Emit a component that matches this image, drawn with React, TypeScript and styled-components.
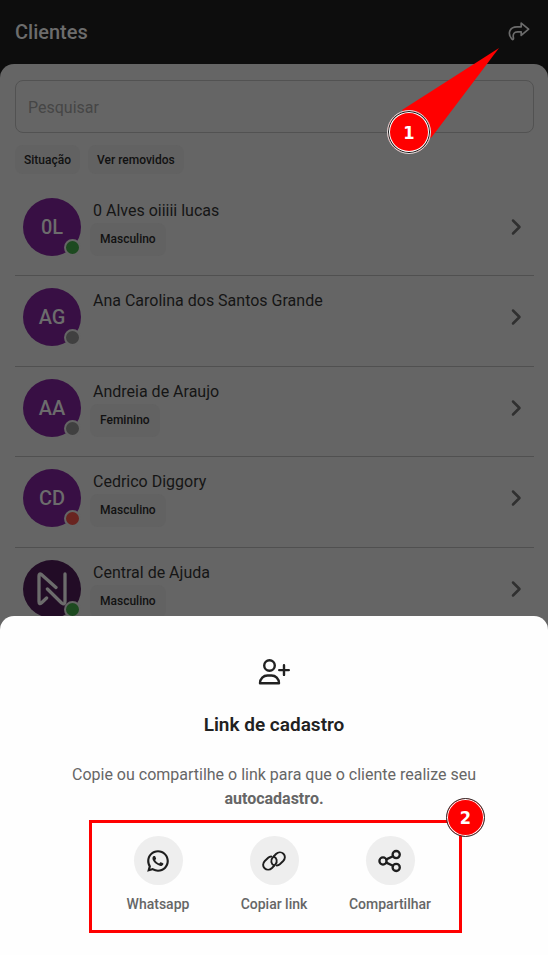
import React from "react";
import styled, { createGlobalStyle } from "styled-components";
import { RiWhatsappLine } from "react-icons/ri";

const GlobalStyle = createGlobalStyle`
  *, *::before, *::after { box-sizing: border-box; }
  body { margin: 0; background: #0d0d0d; font-family: Roboto, "Noto Sans", sans-serif; }
  button, input { font: inherit; }
  button { border: 0; padding: 0; background: none; cursor: pointer; }
  h1, h2, p, ul { margin: 0; padding: 0; }
`;

const Screen = styled.div`
  position: relative;
  display: flex;
  flex-direction: column;
  height: 100vh;
  overflow: hidden;
`;

const Header = styled.header`
  position: relative;
  display: flex;
  flex: none;
  align-items: center;
  justify-content: space-between;
  height: 64px;
  padding: 0 18px 0 15px;
  color: #6c6c6c;
`;

const Title = styled.h1`
  font-size: 20px;
  line-height: 24px;
  font-weight: 500;
`;

const ShareButton = styled.button`
  display: flex;
  color: #6c6c6c;
`;

const Panel = styled.main`
  flex: 1;
  padding: 16px 14px 0 15px;
  border-radius: 14px 14px 0 0;
  background: #656565;
`;

const Search = styled.input`
  display: block;
  width: 100%;
  height: 53px;
  padding: 1px 12px 0;
  border: 1px solid #525252;
  border-radius: 8px;
  outline: 0;
  background: transparent;
  font-size: 16px;
  color: #1c1c1c;
  &::placeholder { color: #464646; opacity: 1; }
`;

const Filters = styled.div`
  display: flex;
  gap: 8px;
  margin-top: 12px;
`;

const FilterChip = styled.button`
  height: 29px;
  padding: 0 9px;
  border-radius: 8px;
  background: #626262;
  font-size: 12px;
  font-weight: 500;
  color: #111;
`;

const List = styled.ul`
  display: grid;
  grid-auto-rows: 1fr;
  height: 452px;
  margin-top: 12px;
  list-style: none;
`;

const Row = styled.li`
  display: flex;
  align-items: flex-start;
  gap: 12px;
  padding: 12px 8px 0;
  border-bottom: 1px solid #505050;
`;

const Avatar = styled.div<{ $dark?: boolean }>`
  position: relative;
  display: flex;
  flex: none;
  align-items: center;
  justify-content: center;
  width: 58px;
  height: 58px;
  border-radius: 50%;
  background: ${(p) => (p.$dark ? "#220c26" : "#380f44")};
  font-size: 20px;
  font-weight: 500;
  color: #6c6c6c;
`;

const Status = styled.span<{ $color: string }>`
  position: absolute;
  right: 0;
  bottom: 0;
  width: 17px;
  height: 17px;
  border: 2px solid #656565;
  border-radius: 50%;
  background: ${(p) => p.$color};
`;

const Info = styled.div`
  flex: 1;
  padding-top: 1px;
`;

const Name = styled.p`
  font-size: 16px;
  line-height: 24px;
  color: #151515;
`;

const Tag = styled.span`
  display: inline-block;
  margin-left: -3px;
  padding: 0 10px;
  border-radius: 8px;
  background: #626262;
  font-size: 12px;
  line-height: 33px;
  font-weight: 500;
  color: #111;
`;

const RowButton = styled.button`
  display: flex;
  align-items: center;
  height: 58px;
  color: #303030;
`;

const Sheet = styled.section`
  position: absolute;
  inset: auto 0 0;
  display: flex;
  flex-direction: column;
  align-items: center;
  padding: 40px 24px 42px;
  border-radius: 14px 14px 0 0;
  background: #fefefe;
  color: #212121;
`;

const SheetTitle = styled.h2`
  margin-top: 25px;
  font-size: 19px;
  line-height: 24px;
  font-weight: 600;
`;

const Description = styled.p`
  max-width: 440px;
  margin-top: 26px;
  font-size: 16px;
  line-height: 24px;
  text-align: center;
  color: #666;
`;

const Actions = styled.div`
  position: relative;
  display: grid;
  grid-template-columns: repeat(3, 116px);
  margin-top: 25px;
`;

const Action = styled.button`
  display: flex;
  flex-direction: column;
  align-items: center;
  gap: 10px;
  font-size: 14px;
  line-height: 18px;
  font-weight: 500;
  color: #666;
`;

const ActionIcon = styled.span`
  display: flex;
  align-items: center;
  justify-content: center;
  width: 49px;
  height: 49px;
  border-radius: 50%;
  background: #eee;
  color: #1e1e1e;
`;

const Highlight = styled.div`
  position: absolute;
  inset: -16px -14px -20px -11px;
  border: 3px solid #f00;
  pointer-events: none;
`;

const Callout = styled.div`
  position: absolute;
  top: 48px;
  right: 49px;
  width: 112px;
  height: 106px;
  pointer-events: none;
`;

const Pointer = styled.svg`
  display: block;
`;

const Marker = styled.span<{ $place: "start" | "corner" }>`
  position: absolute;
  ${(p) => (p.$place === "start" ? "left: 0; bottom: 0;" : "top: -25px; right: -26px;")}
  display: flex;
  align-items: center;
  justify-content: center;
  width: ${(p) => (p.$place === "start" ? 44 : 39)}px;
  height: ${(p) => (p.$place === "start" ? 44 : 39)}px;
  border: 1px solid ${(p) => (p.$place === "start" ? "#ddd" : "#333")};
  border-radius: 50%;
  background: #f00;
  box-shadow: ${(p) =>
    p.$place === "start"
      ? "inset 0 0 0 1px #111, inset 0 0 0 2px #fff"
      : "inset 0 0 0 1px #fff"};
  font-family: "DejaVu Sans Condensed", "DejaVu Sans", sans-serif;
  font-size: 18px;
  font-weight: 700;
  color: #fff;
`;

const strokeProps = {
  fill: "none",
  stroke: "currentColor",
  strokeLinecap: "round" as const,
  strokeLinejoin: "round" as const,
};

const ForwardIcon = () => (
  <svg width="22" height="20" viewBox="0 0 22 20" {...strokeProps} strokeWidth="1.7">
    <path d="M13.2 1.2 20.6 7.2 13.2 13.4V9.8H9.5C6.2 9.8 4.6 12 5.4 15.8 5.8 17.8 4.5 18 3.6 16.8 -.6 11.5 1.4 4.8 9 4.8H13.2Z" />
  </svg>
);

const UserPlusIcon = () => (
  <svg width="32" height="32" viewBox="0 0 32 32" {...strokeProps} strokeWidth="2.4">
    <circle cx="11.5" cy="9.5" r="5.3" />
    <path d="M2 27.3C2 22.5 5.5 19.5 9.5 19.5H13.5C17.5 19.5 21 22.5 21 27.3Z" />
    <path d="M26 9.3V18.9M21.2 14.1H30.8" />
  </svg>
);

const LinkIcon = () => (
  <svg width="26" height="26" viewBox="0 0 26 26" {...strokeProps} strokeWidth="1.9">
    <path d="M13.2 17.4C10.2 16.4 9.2 12.2 11.6 9.6L15 6C17.2 3.9 20.4 3.8 22.4 5.7 24.5 7.7 24.3 10.8 22.2 13L18.8 16.2C17.8 17.1 16.9 17.4 15.8 17.5" />
    <path d="M12.8 8.6C15.8 9.6 16.8 13.8 14.4 16.4L11 20C8.8 22.1 5.6 22.2 3.6 20.3 1.5 18.3 1.7 15.2 3.8 13L7.2 9.8C8.2 8.9 9.1 8.6 10.2 8.5" />
  </svg>
);

const NodesIcon = () => (
  <svg width="24" height="24" viewBox="0 0 24 24" {...strokeProps} strokeWidth="2.3">
    <circle cx="5" cy="12" r="3.6" />
    <circle cx="18.2" cy="5.6" r="3.6" />
    <circle cx="18.2" cy="18.4" r="3.6" />
    <path d="M8.3 10.4 15 7.2M8.3 13.6 15 16.8" />
  </svg>
);

const ChevronIcon = () => (
  <svg width="20" height="20" viewBox="0 0 20 20" {...strokeProps} strokeWidth="2.5">
    <path d="M7 3.5 13.5 10 7 16.5" />
  </svg>
);

const BrandIcon = () => (
  <svg width="30" height="34" viewBox="0 0 30 34" {...strokeProps} strokeWidth="3.3">
    <path d="M19 15.5 4.4 2.4Q2 1 2 4V29.5Q2 33 4.6 30.8L9.6 26" />
    <path d="M10.4 17 24.6 31Q28 33.4 28 29.5V2" />
  </svg>
);

const clients = [
  { name: "0 Alves oiiiii lucas", initials: "0L", tag: "Masculino", status: "#1d4a20" },
  { name: "Ana Carolina dos Santos Grande", initials: "AG", status: "#404040" },
  { name: "Andreia de Araujo", initials: "AA", tag: "Feminino", status: "#404040" },
  { name: "Cedrico Diggory", initials: "CD", tag: "Masculino", status: "#692420" },
  { name: "Central de Ajuda", tag: "Masculino", status: "#1d4a20" },
];

export default function App() {
  return (
    <Screen>
      <GlobalStyle />
      <Header>
        <Title>Clientes</Title>
        <ShareButton aria-label="Compartilhar link"><ForwardIcon /></ShareButton>
        <Callout>
          <Pointer width="112" height="106" viewBox="0 0 112 106">
            <path d="M112 0 15 62 44 90Z" fill="#f00" />
          </Pointer>
          <Marker $place="start">1</Marker>
        </Callout>
      </Header>
      <Panel>
        <Search type="search" placeholder="Pesquisar" aria-label="Pesquisar" />
        <Filters>
          <FilterChip>Situação</FilterChip>
          <FilterChip>Ver removidos</FilterChip>
        </Filters>
        <List>
          {clients.map((c) => (
            <Row key={c.name}>
              <Avatar $dark={!c.initials}>
                {c.initials ?? <BrandIcon />}
                <Status $color={c.status} />
              </Avatar>
              <Info>
                <Name>{c.name}</Name>
                {c.tag && <Tag>{c.tag}</Tag>}
              </Info>
              <RowButton aria-label={`Abrir ${c.name}`}><ChevronIcon /></RowButton>
            </Row>
          ))}
        </List>
      </Panel>
      <Sheet role="dialog" aria-labelledby="sheet-title">
        <UserPlusIcon />
        <SheetTitle id="sheet-title">Link de cadastro</SheetTitle>
        <Description>
          Copie ou compartilhe o link para que o cliente realize seu <strong>autocadastro.</strong>
        </Description>
        <Actions>
          <Action><ActionIcon><RiWhatsappLine size={26} /></ActionIcon>Whatsapp</Action>
          <Action><ActionIcon><LinkIcon /></ActionIcon>Copiar link</Action>
          <Action><ActionIcon><NodesIcon /></ActionIcon>Compartilhar</Action>
          <Highlight><Marker $place="corner">2</Marker></Highlight>
        </Actions>
      </Sheet>
    </Screen>
  );
}
